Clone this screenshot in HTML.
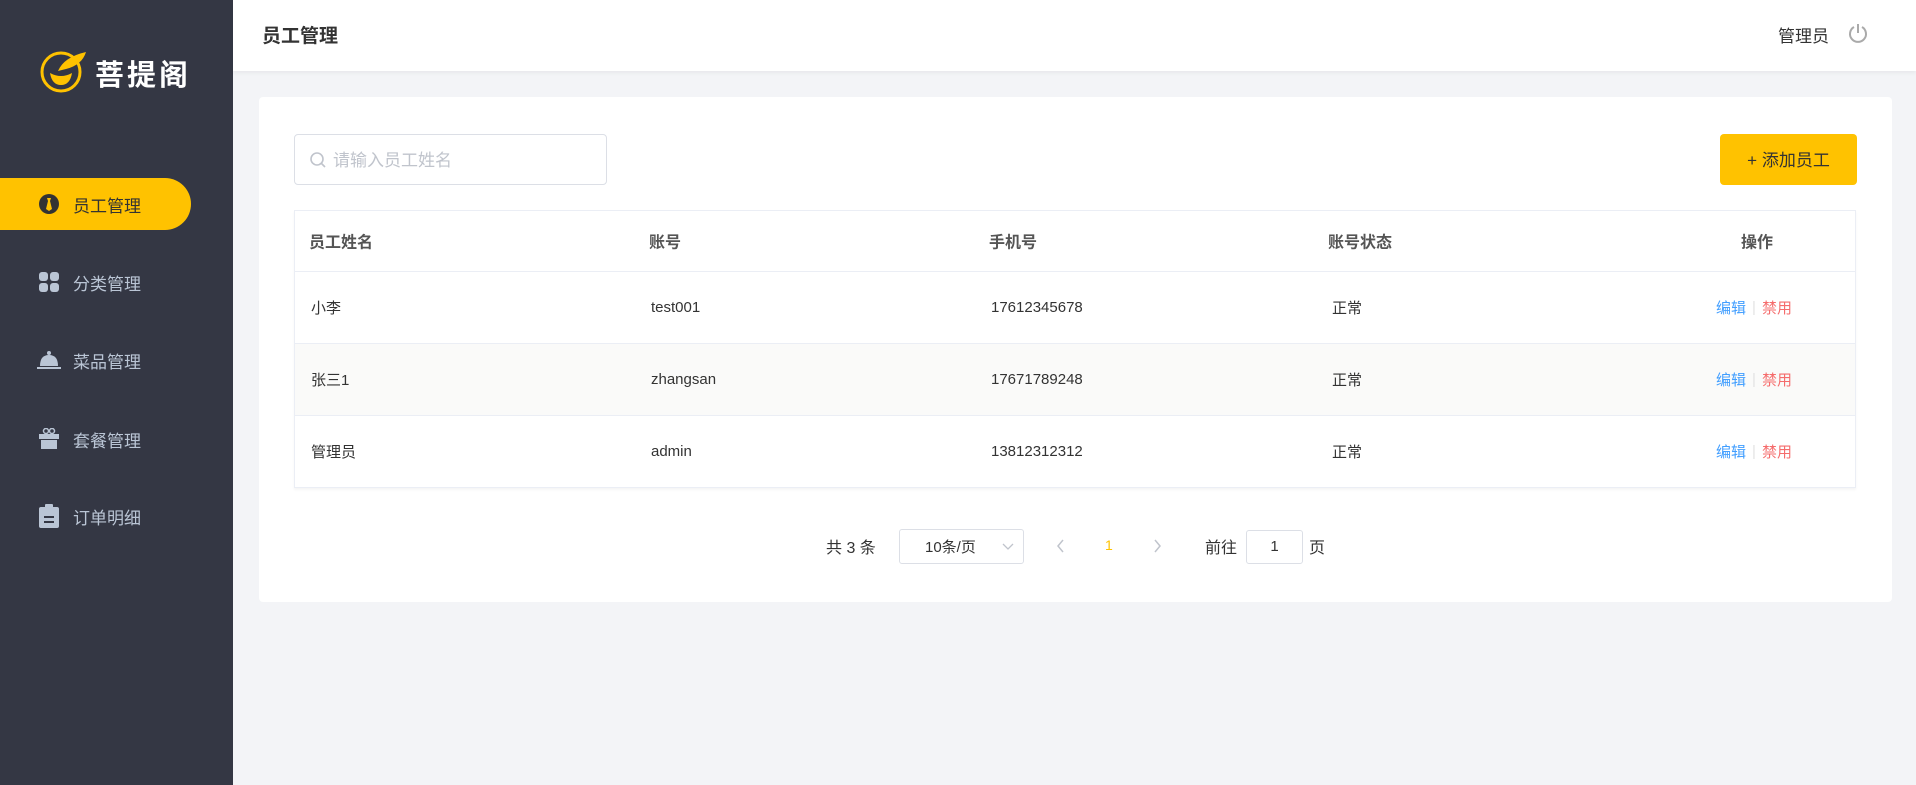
<!DOCTYPE html>
<html><head><meta charset="utf-8"><style>
*{margin:0;padding:0;box-sizing:border-box}
body{width:1916px;height:785px;background:#f3f4f7;font-family:"Liberation Sans","Noto Sans CJK SC",sans-serif;position:relative;overflow:hidden;color:#333}
.side{position:absolute;left:0;top:0;width:233px;height:785px;background:#343744}
.abs{position:absolute}
.item{position:absolute;left:0;width:191px;height:52px;display:flex;align-items:center;font-size:17px;color:#bac5d5}
.item .ic{width:24px;height:24px;margin-left:37px;margin-right:12px;display:flex;align-items:center;justify-content:center}
.item.act{background:#ffc200;border-radius:0 26px 26px 0;color:#333}
.header{position:absolute;left:233px;top:0;right:0;height:71px;background:#fff;box-shadow:0 2px 4px rgba(0,0,0,.05)}
.card{position:absolute;left:259px;top:97px;width:1633px;height:505px;background:#fff;border-radius:4px}
.tbl{position:absolute;left:294px;top:210px;width:1562px;border:1px solid #ebeef5;box-shadow:0 2px 2px rgba(0,0,0,.04)}
.row{height:72px;border-top:1px solid #ebeef5;position:relative;font-size:15px;color:#333}
.row.h{height:60px;border-top:0;font-weight:bold;color:#555;font-size:16px}
.row span{position:absolute;top:50%;transform:translateY(-52%)}
.row.g{background:#fafaf9}
</style></head><body>
<div class="side">
 <svg class="abs" style="left:40px;top:49px" width="50" height="44" viewBox="0 0 50 44">
  <circle cx="21" cy="23" r="19" fill="none" stroke="#ffc200" stroke-width="3"/>
  <path d="M10 24 Q21 30 32 24 Q30 36 21 36 Q12 36 10 24Z" fill="#ffc200"/>
  <path d="M18 22 Q24 8 46 3 Q42 16 26 20 Z" fill="#ffc200"/>
 </svg>
 <div class="abs" style="left:95px;top:52px;font-size:29px;font-weight:bold;color:#fff;letter-spacing:3px">菩提阁</div>
 <div class="item act" style="top:178px"><span class="ic"><svg width="22" height="22"><circle cx="11" cy="11" r="10" fill="#333"/><path d="M9 5h4l-1 3 2 8-3 2-3-2 2-8z" fill="#ffc200"/></svg></span>员工管理</div>
 <div class="item" style="top:256px"><span class="ic"><svg width="20" height="20" fill="#bac5d5"><rect x="0" y="0" width="9" height="9" rx="3"/><rect x="11" y="0" width="9" height="9" rx="3"/><rect x="0" y="11" width="9" height="9" rx="3"/><rect x="11" y="11" width="9" height="9" rx="3"/></svg></span>分类管理</div>
 <div class="item" style="top:334px"><span class="ic"><svg width="24" height="20" fill="#bac5d5"><path d="M3 16 Q3 5 12 5 Q21 5 21 16Z"/><circle cx="12" cy="3" r="2"/><rect x="0" y="17" width="24" height="2"/></svg></span>菜品管理</div>
 <div class="item" style="top:413px"><span class="ic"><svg width="20" height="22" fill="#bac5d5"><circle cx="7" cy="3" r="2.5" fill="none" stroke="#bac5d5" stroke-width="1.5"/><circle cx="13" cy="3" r="2.5" fill="none" stroke="#bac5d5" stroke-width="1.5"/><rect x="0" y="6" width="20" height="5"/><rect x="2" y="12" width="16" height="9"/></svg></span>套餐管理</div>
 <div class="item" style="top:490px"><span class="ic"><svg width="20" height="24" fill="#bac5d5"><rect x="0" y="3" width="20" height="21" rx="2"/><rect x="6" y="0" width="8" height="5" rx="1"/><rect x="5" y="12" width="10" height="2" fill="#343744"/><rect x="5" y="17" width="10" height="2" fill="#343744"/></svg></span>订单明细</div>
</div>
<div class="header">
 <div class="abs" style="left:29px;top:21px;font-size:19px;font-weight:bold;color:#333">员工管理</div>
 <div class="abs" style="left:1545px;top:22px;font-size:17px;color:#333">管理员</div>
 <svg class="abs" style="left:1615px;top:22px" width="20" height="22" fill="none" stroke="#aaa" stroke-width="2"><path d="M6 5 A8 8 0 1 0 14 5"/><path d="M10 2 V11"/></svg>
</div>
<div class="card"></div>
<div class="abs" style="left:294px;top:134px;width:313px;height:51px;border:1px solid #dcdfe6;border-radius:4px;background:#fff">
 <svg class="abs" style="left:14px;top:16px" width="18" height="18" fill="none" stroke="#c0c4cc" stroke-width="1.6"><circle cx="8" cy="8" r="6"/><path d="M12.5 12.5 L16 16"/></svg>
 <div class="abs" style="left:38px;top:11px;font-size:17px;color:#c0c4cc">请输入员工姓名</div>
</div>
<div class="abs" style="left:1720px;top:134px;width:137px;height:51px;background:#ffc200;border-radius:4px;font-size:17px;color:#333;display:flex;align-items:center;justify-content:center;padding-bottom:2px">+ 添加员工</div>
<div class="tbl">
 <div class="row h"><span style="left:14px">员工姓名</span><span style="left:354px">账号</span><span style="left:694px">手机号</span><span style="left:1033px">账号状态</span><span style="left:1446px">操作</span></div>
 <div class="row"><span style="left:16px">小李</span><span style="left:356px">test001</span><span style="left:696px">17612345678</span><span style="left:1037px">正常</span><span style="left:1421px;color:#419eff">编辑</span><span style="left:1457px;color:#e3e3e3">|</span><span style="left:1467px;color:#f56c6c">禁用</span></div>
 <div class="row g"><span style="left:16px">张三1</span><span style="left:356px">zhangsan</span><span style="left:696px">17671789248</span><span style="left:1037px">正常</span><span style="left:1421px;color:#419eff">编辑</span><span style="left:1457px;color:#e3e3e3">|</span><span style="left:1467px;color:#f56c6c">禁用</span></div>
 <div class="row"><span style="left:16px">管理员</span><span style="left:356px">admin</span><span style="left:696px">13812312312</span><span style="left:1037px">正常</span><span style="left:1421px;color:#419eff">编辑</span><span style="left:1457px;color:#e3e3e3">|</span><span style="left:1467px;color:#f56c6c">禁用</span></div>
</div>
<div class="abs" style="left:826px;top:534px;font-size:16px;color:#333">共 3 条</div>
<div class="abs" style="left:899px;top:529px;width:125px;height:35px;border:1px solid #dcdfe6;border-radius:3px;font-size:15px;color:#333;padding:6px 0 0 25px">10条/页<svg class="abs" style="left:102px;top:13px" width="12" height="8" fill="none" stroke="#c0c4cc" stroke-width="1.3"><path d="M1 1 L6 6 L11 1"/></svg></div>
<svg class="abs" style="left:1056px;top:538px" width="10" height="16" fill="none" stroke="#c0c4cc" stroke-width="1.5"><path d="M7 2 L2 8 L7 14"/></svg>
<div class="abs" style="left:1105px;top:537px;font-size:14px;color:#ffc200">1</div>
<svg class="abs" style="left:1152px;top:538px" width="10" height="16" fill="none" stroke="#c0c4cc" stroke-width="1.5"><path d="M3 2 L8 8 L3 14"/></svg>
<div class="abs" style="left:1205px;top:534px;font-size:16px;color:#333">前往</div>
<div class="abs" style="left:1246px;top:530px;width:57px;height:34px;border:1px solid #dcdfe6;border-radius:3px;font-size:15px;color:#333;text-align:center;line-height:32px">1</div>
<div class="abs" style="left:1309px;top:534px;font-size:16px;color:#333">页</div>
</body></html>
